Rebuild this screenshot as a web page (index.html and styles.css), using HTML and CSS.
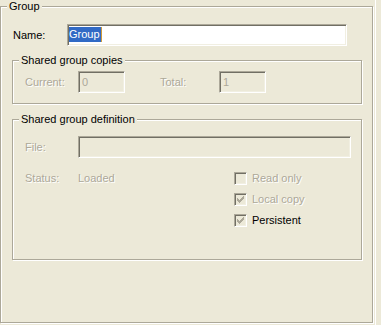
FILE: index.html
```html
<!DOCTYPE html>
<html>
<head>
<meta charset="utf-8">
<link rel="stylesheet" href="styles.css">
</head>
<body>
<div class="page">
  <div class="group outer">
    <span class="title">Group</span>
    <div class="row name-row">
      <span class="lbl-name">Name:</span>
      <div class="edit name-edit"><span class="sel">Group</span><span class="caret"></span></div>
    </div>
    <div class="group copies">
      <span class="title">Shared group copies</span>
      <div class="row">
        <span class="lbl dis">Current:</span>
        <div class="edit disabled small">0</div>
        <span class="lbl lbl-total dis">Total:</span>
        <div class="edit disabled small">1</div>
      </div>
    </div>
    <div class="group def">
      <span class="title">Shared group definition</span>
      <div class="row">
        <span class="lbl dis">File:</span>
        <div class="edit disabled file-edit"></div>
      </div>
      <div class="lower">
        <div class="status">
          <span class="lbl dis">Status:</span>
          <span class="dis">Loaded</span>
        </div>
        <div class="checks">
          <div class="check"><span class="box"></span><span class="dis">Read only</span></div>
          <div class="check"><span class="box"><svg width="11" height="11" viewBox="0 0 11 11"><path d="M2 4h1v3h-1zM3 5h1v3h-1zM4 6h1v3h-1zM5 5h1v3h-1zM6 4h1v3h-1zM7 3h1v3h-1zM8 2h1v3h-1z" fill="#ACA899"/></svg></span><span class="dis">Local copy</span></div>
          <div class="check"><span class="box"><svg width="11" height="11" viewBox="0 0 11 11"><path d="M2 4h1v3h-1zM3 5h1v3h-1zM4 6h1v3h-1zM5 5h1v3h-1zM6 4h1v3h-1zM7 3h1v3h-1zM8 2h1v3h-1z" fill="#ACA899"/></svg></span><span class="txt">Persistent</span></div>
        </div>
      </div>
    </div>
  </div>
  <div class="edge"></div>
</div>
</body>
</html>
```
FILE: styles.css
```css
body {
  margin: 0;
  background: #ECE9D8;
  font-family: "Liberation Sans", Arial, sans-serif;
  font-size: 11px;
  color: #000;
}
.page {
  width: 381px;
  height: 325px;
  overflow: hidden;
  display: flex;
  align-items: flex-start;
}
.group {
  position: relative;
  box-sizing: border-box;
  border: 1px solid #ACA899;
  box-shadow: inset 1px 1px 0 #fff, 1px 1px 0 #fff;
}
.title {
  position: absolute;
  top: -7px;
  left: 6px;
  padding: 0 2px;
  line-height: 13px;
  background: #ECE9D8;
  white-space: nowrap;
}
.outer {
  margin-top: 6px;
  width: 373px;
  height: 317px;
  padding: 17px 0 0 11px;
}
.row {
  display: flex;
  align-items: center;
}
.name-row {
  height: 22px;
  padding-left: 1px;
}
.lbl-name {
  width: 54px;
}
.edit {
  box-sizing: border-box;
  height: 22px;
  border: 1px solid;
  border-color: #ACA899 #fff #fff #ACA899;
  box-shadow: inset 1px 1px 0 #716F64, inset -1px -1px 0 #F1EFE2;
  background: #fff;
  line-height: 14px;
}
.name-edit {
  width: 280px;
  padding: 2px 0 0 1px;
  display: flex;
  align-items: flex-start;
}
.sel {
  background: #316AC5;
  color: #fff;
  padding: 0 1px 0 0;
  line-height: 15px;
}
.caret {
  width: 1px;
  height: 15px;
  background: #CE9A3A;
}
.copies {
  margin-top: 14px;
  width: 350px;
  height: 44px;
  padding: 10px 0 0 12px;
}
.lbl {
  width: 53px;
  flex: none;
}
.lbl-total {
  margin-left: 35px;
  width: 59px;
}
.dis {
  color: #ACA899;
  text-shadow: 1px 1px 0 #fff;
}
.disabled {
  background: #ECE9D8;
  color: #ACA899;
  padding: 3px 0 0 3px;
}
.small {
  width: 47px;
}
.def {
  margin-top: 15px;
  width: 350px;
  height: 141px;
  padding: 16px 0 0 12px;
}
.file-edit {
  width: 273px;
}
.lower {
  display: flex;
  margin-top: 13px;
}
.status {
  display: flex;
  width: 209px;
  line-height: 15px;
}
.checks {
  display: flex;
  flex-direction: column;
  gap: 6px;
}
.check {
  display: flex;
  align-items: center;
  height: 15px;
  line-height: 15px;
  gap: 5px;
}
.box {
  box-sizing: border-box;
  width: 13px;
  height: 13px;
  border: 1px solid;
  border-color: #ACA899 #fff #fff #ACA899;
  box-shadow: inset 1px 1px 0 #716F64, inset -1px -1px 0 #F1EFE2;
  display: flex;
}
.box svg {
  display: block;
}
.txt {
  color: #000;
}
.edge {
  margin-left: 2px;
  width: 1px;
  height: 325px;
  background: #fff;
}
```
